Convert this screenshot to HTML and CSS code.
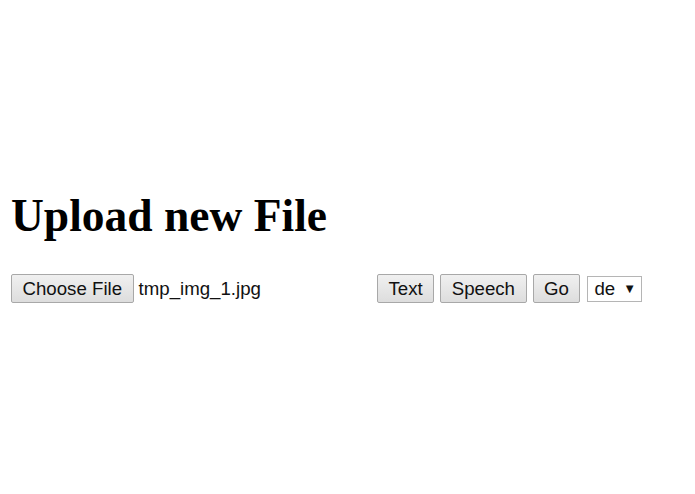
FILE: index.html
```html
<!DOCTYPE html>
<html lang="en">
<head>
<meta charset="utf-8">
<title>Upload new File</title>
<link rel="stylesheet" href="styles.css">
</head>
<body>
<main class="page">
  <h1 class="title">Upload new File</h1>
  <form class="upload-form">
    <div class="file-field">
      <span class="btn">Choose File</span>
      <span class="file-name">tmp_img_1.jpg</span>
    </div>
    <div class="actions">
      <span class="btn">Text</span>
      <span class="btn">Speech</span>
      <span class="btn">Go</span>
      <span class="select">de <span class="arrow">&#9660;</span></span>
    </div>
  </form>
</main>
</body>
</html>
```

FILE: styles.css
```css
html, body {
  margin: 0;
  padding: 0;
  background: #ffffff;
}

.page {
  padding: 190px 11px 0 11px;
}

.title {
  margin: 0;
  font-family: "Liberation Serif", "Times New Roman", serif;
  font-weight: bold;
  font-size: 45.5px;
  line-height: 51px;
  color: #000;
}

.upload-form {
  margin-top: 33px;
  display: flex;
  align-items: center;
  font-family: "Liberation Sans", Arial, sans-serif;
  font-size: 18.67px;
  color: #000;
}

.file-field {
  width: 366px;
  display: flex;
  align-items: center;
  gap: 5px;
}

.actions {
  display: flex;
  align-items: center;
  gap: 6px;
}

.btn {
  box-sizing: border-box;
  height: 29px;
  line-height: 27px;
  padding: 0 10.5px;
  border: 1px solid #a8a8a8;
  border-radius: 2px;
  background: linear-gradient(#f0f0f0, #dddddd);
  color: #111;
  white-space: nowrap;
}

.file-name {
  line-height: 27px;
  color: #111;
}

.select {
  box-sizing: border-box;
  margin-left: 1px;
  height: 26px;
  width: 55px;
  padding: 0 0 0 6px;
  line-height: 24px;
  border: 1px solid #b5b5b5;
  background: #fff;
  color: #111;
  white-space: nowrap;
  display: flex;
  align-items: center;
  gap: 8px;
}

.arrow {
  font-size: 13px;
  line-height: 1;
}
```
